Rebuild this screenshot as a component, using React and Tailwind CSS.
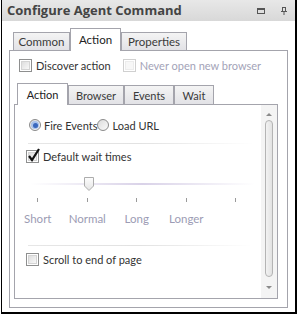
import React from 'react';

const font = { fontFamily: 'Lato, "Open Sans", Arial, sans-serif' };
const titleFont = { fontFamily: '"Open Sans", Arial, sans-serif' };

const CheckBox = ({ checked, disabled }) => (
  <div className="relative w-[13px] h-[13px] shrink-0">
    <div
      className={
        'w-[13px] h-[13px] border p-px ' +
        (disabled ? 'border-[#d0d0d0] bg-white' : 'border-[#8e8f8f] bg-white')
      }
    >
      <div
        className={
          'w-full h-full border ' +
          (disabled
            ? 'border-[#ececec] bg-[#f7f7f7]'
            : 'border-[#d4d4d4] bg-gradient-to-br from-[#dedede] to-[#f8f8f8]')
        }
      />
    </div>
    {checked && (
      <svg className="absolute left-[1px] top-[-3px]" width="14" height="15" viewBox="0 0 14 15">
        <path d="M2 9 L5 13 L12 2" fill="none" stroke="#111" strokeWidth="2.2" strokeLinejoin="miter" />
      </svg>
    )}
  </div>
);

const Radio = ({ checked }) => (
  <div className="w-[12px] h-[12px] rounded-full border border-[#8b8b8b] bg-gradient-to-br from-[#dcdcdc] to-[#fbfbfb] flex items-center justify-center shrink-0">
    {checked && (
      <div className="w-[8px] h-[8px] rounded-full bg-[#a9c2ea] flex items-center justify-center">
        <div className="w-[5px] h-[5px] rounded-full bg-[#3a68bd]" />
      </div>
    )}
  </div>
);

const Tab = ({ label, active, w, h }) => (
  <div
    className={
      'flex items-center justify-center border border-b-0 border-[#a4a4ac] whitespace-nowrap ' +
      (active ? 'bg-white relative z-10 -mb-px text-[#222]' : 'bg-gradient-to-b from-[#f4f4f4] to-[#e2e2e6] text-[#3a3a3a]')
    }
    style={{ width: w, height: h }}
  >
    {label}
  </div>
);

const Separator = () => (
  <div className="h-px w-[225px] bg-gradient-to-r from-[#e6e6e6] via-[#e2e2e2] to-transparent" />
);

export default function App() {
  const ticks = ['Short', 'Normal', 'Long', 'Longer', ''];
  return (
    <div className="w-[300px] h-[318px] bg-white text-[11px] leading-none whitespace-nowrap" style={font}>
      <div className="ml-px w-[296px] h-[314px] border-l border-r-2 border-b-2 border-black flex flex-col bg-white">
        {/* title bar */}
        <div className="h-[21px] shrink-0 flex items-center pl-[5px] pr-[8px] bg-gradient-to-b from-[#e8e8e8] to-[#d8d8d8]">
          <span className="font-bold text-[13px] text-[#444]" style={titleFont}>
            Configure Agent Command
          </span>
          <div className="ml-auto flex items-center gap-[16px]">
            <svg width="8" height="6" viewBox="0 0 8 6">
              <rect x="0.5" y="0.5" width="7" height="5" fill="none" stroke="#555" />
              <rect x="0" y="0" width="8" height="2" fill="#555" />
            </svg>
            <svg width="6" height="8" viewBox="0 0 6 8">
              <rect x="1.5" y="0.5" width="3" height="4" fill="none" stroke="#555" />
              <rect x="0" y="4" width="6" height="1" fill="#555" />
              <rect x="2.5" y="5" width="1" height="3" fill="#555" />
            </svg>
          </div>
        </div>

        {/* body */}
        <div className="pt-[7px] pl-[7px]">
          <div className="flex items-end h-[22px] pl-[4px] text-[11.5px]">
            <Tab label="Common" w={57} h={18} />
            <Tab label="Action" active w={51} h={23} />
            <Tab label="Properties" w={66} h={18} />
          </div>
          <div className="w-[279px] h-[258px] border border-[#a4a4ac] pt-[8px] pl-[9px]">
            <div className="flex items-center h-[13px]">
              <CheckBox />
              <span className="ml-[4px] text-[#333]">Discover action</span>
              <div className="ml-[12px]">
                <CheckBox disabled />
              </div>
              <span className="ml-[4px] text-[#a3a3b8]">Never open new browser</span>
            </div>

            <div className="mt-[11px] -ml-[5px]">
              <div className="flex items-end h-[21px] pl-[3px]">
                <Tab label="Action" active w={51} h={22} />
                <Tab label="Browser" w={56} h={19} />
                <Tab label="Events" w={50} h={19} />
                <Tab label="Wait" w={40} h={19} />
              </div>
              <div className="w-[264px] h-[195px] border border-[#a4a4ac] flex">
                <div className="flex-1 pl-[14px] pt-[14px]">
                  <div className="flex items-center h-[12px]">
                    <Radio checked />
                    <span className="ml-[3px] text-[#333]">Fire Events</span>
                    <Radio />
                    <span className="ml-[3px] text-[#333]">Load URL</span>
                  </div>
                  <div className="mt-[12px] -ml-px">
                    <Separator />
                  </div>
                  <div className="mt-[6px] flex items-center h-[12px] -ml-[3px]">
                    <CheckBox checked />
                    <span className="ml-[4px] text-[#333]">Default wait times</span>
                  </div>

                  {/* slider */}
                  <div className="relative mt-[15px] h-[14px] -ml-[14px]">
                    <div className="absolute left-[15px] top-[6px] w-[225px] h-[2px] bg-gradient-to-r from-transparent via-[#d9d2e8] to-transparent" />
                    <svg className="absolute left-[69px] top-0" width="10" height="14" viewBox="0 0 10 14">
                      <defs>
                        <linearGradient id="th" x1="0" y1="0" x2="0" y2="1">
                          <stop offset="0" stopColor="#fdfdfd" />
                          <stop offset="1" stopColor="#e4e4e4" />
                        </linearGradient>
                      </defs>
                      <path d="M0.5 0.5 H9.5 V9 L5 13.5 L0.5 9 Z" fill="url(#th)" stroke="#acacac" />
                    </svg>
                  </div>
                  <div className="-ml-[16px] mt-[7px] flex">
                    {ticks.map((t, i) => (
                      <div key={i} className="w-[49.5px] flex flex-col items-center">
                        <div className="w-px h-[4px] bg-[#9a9a9a]" />
                        <span className="mt-[11px] text-[11.5px] text-[#9c9cb4] h-[11px]">{t}</span>
                      </div>
                    ))}
                  </div>
                  <div className="mt-[21px] -ml-px">
                    <Separator />
                  </div>
                  <div className="mt-[7px] flex items-center h-[13px] -ml-[3px]">
                    <CheckBox />
                    <span className="ml-[4px] text-[#333]">Scroll to end of page</span>
                  </div>
                </div>

                {/* scrollbar */}
                <div className="w-[17px] bg-[#f4f4f4] flex flex-col items-center">
                  <svg className="mt-[7px]" width="6" height="4" viewBox="0 0 6 4">
                    <path d="M0 4 L3 1 L6 4 Z" fill="#8a8a8a" />
                  </svg>
                  <div className="mt-[4px] w-[8px] h-[157px] rounded-full border border-[#b4b4b4] bg-gradient-to-r from-[#f2f2f2] to-[#e2e2e2]" />
                  <svg className="mt-[9px]" width="6" height="4" viewBox="0 0 6 4">
                    <path d="M0 0 L6 0 L3 3 Z" fill="#8a8a8a" />
                  </svg>
                </div>
              </div>
            </div>
          </div>
        </div>
      </div>
    </div>
  );
}
